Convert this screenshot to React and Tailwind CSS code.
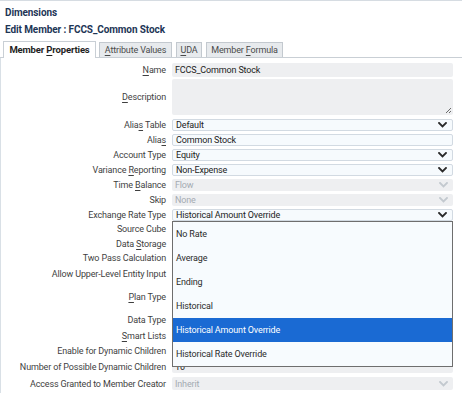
const U = ({ children }) => <span className="underline underline-offset-[1.5px] decoration-[0.8px]">{children}</span>;

const Chevron = ({ disabled }) => (
  <svg width="9" height="6" viewBox="0 0 9 6" className="shrink-0">
    <path d="M1 1 L4.5 4.5 L8 1" fill="none" stroke={disabled ? "#c3c9cf" : "#2a2a2a"} strokeWidth="1.9" strokeLinecap="square" />
  </svg>
);

const Label = ({ children, className = "" }) => (
  <div className={"w-[165px] shrink-0 text-right text-[#3f3f3f] whitespace-nowrap " + className}>{children}</div>
);

const Select = ({ value, disabled }) => (
  <div
    className={
      "flex h-full w-[281px] items-center justify-between rounded-[2px] pl-[3px] pr-[5px] " +
      (disabled ? "bg-[#eeeff1] text-[#a4abb2]" : "border border-[#d2dae2] bg-[#f6fafd] text-[#222]")
    }
  >
    <span>{value}</span>
    <Chevron disabled={disabled} />
  </div>
);

const Row = ({ label, children, h = "h-[12px]" }) => (
  <div className={"flex items-center " + h}>
    <Label>{label}</Label>
    <div className="ml-[6px] h-full">{children}</div>
  </div>
);

const LRow = ({ label, h, children }) => (
  <div className={"flex items-center " + h}>
    <Label>{label}</Label>
    {children ? <div className="ml-[6px] flex h-full items-center">{children}</div> : null}
  </div>
);

export default function App() {
  const items = ["No Rate", "Average", "Ending", "Historical", "Historical Amount Override", "Historical Rate Override"];
  return (
    <div
      className="relative h-[393px] w-[462px] overflow-hidden border-t border-[#d6dce2] bg-white text-[9px] leading-[12px] tracking-[-0.15px]"
      style={{ fontFamily: "Roboto, 'Liberation Sans', sans-serif" }}
    >
      {/* header */}
      <div className="pl-[5px] pt-[5px] text-[10px] font-bold tracking-[-0.1px] text-[#1e3656]">
        <div className="h-[14px] leading-[14px]">Dimensions</div>
        <div className="mt-[3px] h-[14px] leading-[14px]">Edit Member : FCCS_Common Stock</div>
      </div>

      {/* tabs */}
      <div className="mt-[4px] flex h-[17px] items-end gap-[3px] border-b border-[#c9cfd5] pl-[3px]">
        <div className="relative -mb-px flex h-[17px] w-[93px] items-center justify-center border border-b-0 border-[#c9cfd5] bg-white text-[9.5px] font-bold text-[#1f1f1f]">
          <span>
            Member <U>P</U>roperties
          </span>
        </div>
        <div className="flex h-[15px] w-[73px] items-center justify-center border border-b-0 border-[#c3c9cf] bg-[#e7eaed] text-[#4a4a4a]">
          <span>
            <U>A</U>ttribute Values
          </span>
        </div>
        <div className="ml-[1px] flex h-[15px] w-[26px] items-center justify-center border border-b-0 border-[#c3c9cf] bg-[#e7eaed] text-[#4a4a4a]">
          <span>
            <U>U</U>DA
          </span>
        </div>
        <div className="ml-[1px] flex h-[15px] w-[77px] items-center justify-center border border-b-0 border-[#c3c9cf] bg-[#e7eaed] text-[#4a4a4a]">
          <span>
            Member <U>F</U>ormula
          </span>
        </div>
      </div>

      {/* form */}
      <div className="flex h-full flex-col border-l border-[#d9e0e6] pt-[5px]">
        <div className="flex h-[14px] items-center">
          <Label>
            <U>N</U>ame
          </Label>
          <div className="ml-[6px] flex h-full w-[281px] items-center rounded-[2px] bg-[#eeeff1] pl-[3px] text-[#222]">FCCS_Common Stock</div>
        </div>

        <div className="mt-[2px] flex h-[36px] items-center">
          <Label>
            <U>D</U>escription
          </Label>
          <div className="relative ml-[6px] h-full w-[281px] rounded-[2px] bg-[#eeeff1]">
            <svg width="7" height="7" viewBox="0 0 7 7" className="absolute bottom-[1px] right-[1px]">
              <path d="M1 6 L6 1 M4 6 L6 4" stroke="#5a5a5a" strokeWidth="0.9" />
            </svg>
          </div>
        </div>

        <div className="mt-[4px] flex flex-col gap-[3px]">
          <Row label={<>Alia<U>s</U> Table</>}>
            <Select value="Default" />
          </Row>
          <Row label={<>Alia<U>s</U></>}>
            <div className="flex h-full w-[281px] items-center rounded-[2px] border border-[#d2dae2] bg-[#f6fafd] pl-[3px] text-[#222]">Common Stock</div>
          </Row>
          <Row label="Account Type">
            <Select value="Equity" />
          </Row>
          <Row label={<>Variance <U>R</U>eporting</>}>
            <Select value="Non-Expense" />
          </Row>
          <Row label={<>Time <U>B</U>alance</>}>
            <Select value="Flow" disabled />
          </Row>
          <Row label="Skip">
            <Select value="None" disabled />
          </Row>
          <div className="flex h-[12px] items-center">
            <Label>Exchange Rate Type</Label>
            <div className="relative ml-[6px] h-full">
              <Select value="Historical Amount Override" />
              <div className="absolute left-0 top-full z-10 flex w-[281px] flex-col border border-[#6e6e6e] bg-[#f7fbfe] text-[#2b2b2b]">
                {items.map((it) => (
                  <div
                    key={it}
                    className={
                      "flex h-[24px] items-center pl-[3px] " +
                      (it === "Historical Amount Override" ? "bg-[#1a6ad3] text-white" : "")
                    }
                  >
                    {it}
                  </div>
                ))}
              </div>
            </div>
          </div>
        </div>

        <div className="flex flex-col">
          <LRow label="Source Cube" h="h-[15px]" />
          <LRow label={<>Data <U>S</U>torage</>} h="h-[15px]" />
          <LRow label="Two Pass Calculation" h="h-[14px]" />
          <LRow label="Allow Upper-Level Entity Input" h="h-[18px]" />
          <LRow label={<><U>P</U>lan Type</>} h="h-[28px]" />
          <LRow label="Data Type" h="h-[18px]" />
          <LRow label={<><U>S</U>mart Lists</>} h="h-[13px]" />
          <LRow label="Enable for Dynamic Children" h="h-[17px]" />
          <LRow label="Number of Possible Dynamic Children" h="h-[16px]">
            <div className="flex h-[12px] w-[281px] items-center rounded-[2px] bg-[#eeeff1] pl-[3px] text-[#222]">10</div>
          </LRow>
          <LRow label="Access Granted to Member Creator" h="h-[17px]">
            <div className="h-[13px]">
              <Select value="Inherit" disabled />
            </div>
          </LRow>
        </div>
      </div>
    </div>
  );
}
